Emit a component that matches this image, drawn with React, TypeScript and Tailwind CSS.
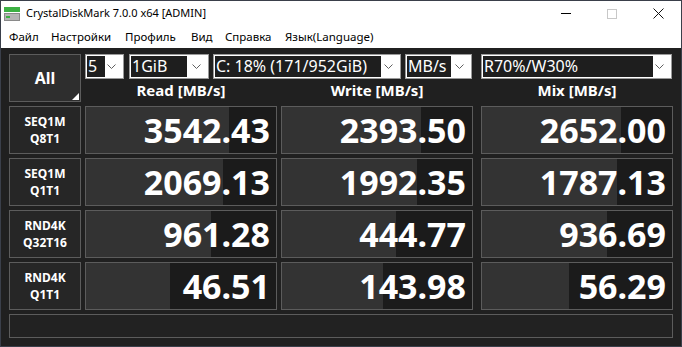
import React from 'react';

const ROWS = [
  { l1: 'SEQ1M', l2: 'Q8T1', vals: [['3542.43', 75], ['2393.50', 73], ['2652.00', 73]] },
  { l1: 'SEQ1M', l2: 'Q1T1', vals: [['2069.13', 72], ['1992.35', 71], ['1787.13', 71]] },
  { l1: 'RND4K', l2: 'Q32T16', vals: [['961.28', 66], ['444.77', 60], ['936.69', 66]] },
  { l1: 'RND4K', l2: 'Q1T1', vals: [['46.51', 44], ['143.98', 53], ['56.29', 46]] },
] as const;

const Chevron = () => (
  <svg width="9" height="6" viewBox="0 0 9 6" className="shrink-0">
    <polyline points="0.5,0.5 4.5,4.5 8.5,0.5" fill="none" stroke="#606060" strokeWidth="1" />
  </svg>
);

const Select = ({ text, w, boxW, ml }: { text: string; w: string; boxW: string; ml: string }) => (
  <div className={`${w} ${ml} h-[25px] bg-white border border-[#9a9a9a] flex items-center pl-[1px] pr-[7px]`}>
    <div className={`${boxW} h-[21px] bg-[#1e1e1e] text-white text-[16px] leading-[21px] pl-[1px] whitespace-nowrap overflow-hidden`}>
      {text}
    </div>
    <div className="flex-1" />
    <Chevron />
  </div>
);

const Cell = ({ value, pct, w }: { value: string; pct: number; w: string }) => (
  <div className={`${w} h-[48px] relative border border-[#5c5c5c] bg-[#1b1b1b] overflow-hidden`}>
    <div className="absolute inset-y-0 left-0 bg-[#333333]" style={{ width: `${pct}%` }} />
    <div className="relative h-full flex items-center justify-end pr-[6px] text-white font-bold text-[34px] leading-none">
      {value}
    </div>
  </div>
);

export default function App() {
  return (
    <div className="w-[682px] h-[347px] flex flex-col border border-[#3a3f4a] overflow-hidden" style={{ fontFamily: '"Noto Sans", "DejaVu Sans", sans-serif' }}>
      {/* title bar */}
      <div className="h-[25px] bg-white flex items-center shrink-0">
        <svg width="16" height="14" viewBox="0 0 16 14" className="ml-[3px]">
          <rect x="0" y="0" width="16" height="5" fill="#3cb043" />
          <rect x="0" y="6" width="16" height="8" fill="#8a8a8a" />
          <rect x="1" y="7" width="14" height="6" fill="#b5b5b5" />
          <rect x="2" y="9" width="4" height="2" fill="#3cb043" />
        </svg>
        <span className="ml-[6px] text-[11px] text-black">CrystalDiskMark 7.0.0 x64 [ADMIN]</span>
        <div className="flex-1" />
        <div className="w-[46px] flex justify-center">
          <div className="w-[10px] h-px bg-black" />
        </div>
        <div className="w-[46px] flex justify-center">
          <div className="w-[10px] h-[10px] border border-[#c8c8c8]" />
        </div>
        <div className="w-[46px] flex justify-center">
          <svg width="11" height="11" viewBox="0 0 11 11">
            <path d="M0.5 0.5 L10.5 10.5 M10.5 0.5 L0.5 10.5" stroke="#111" strokeWidth="1" />
          </svg>
        </div>
      </div>
      {/* menu bar */}
      <div className="h-[22px] bg-white flex items-center text-[11.5px] text-black pl-[8px] shrink-0">
        <span className="w-[42px]">Файл</span>
        <span className="w-[74px]">Настройки</span>
        <span className="w-[66px]">Профиль</span>
        <span className="w-[34px]">Вид</span>
        <span className="w-[60px]">Справка</span>
        <span>Язык(Language)</span>
      </div>
      {/* main */}
      <div className="flex-1 bg-[#202020] pl-[8px] pt-[6px]">
        <div className="flex gap-[4px]">
          <div className="w-[72px] h-[48px] relative border border-[#5c5c5c] bg-[#2e2e2e] flex items-center justify-center text-white font-bold text-[16px]">
            All
            <div className="absolute right-[1px] bottom-[1px] w-0 h-0 border-l-[7px] border-l-transparent border-b-[7px] border-b-white" />
          </div>
          <div className="flex flex-col">
            <div className="flex">
              <Select text="5" w="w-[39px]" boxW="w-[18px]" ml="ml-0" />
              <Select text="1GiB" w="w-[80px]" boxW="w-[56px]" ml="ml-[5px]" />
              <Select text="C: 18% (171/952GiB)" w="w-[188px]" boxW="w-[166px]" ml="ml-[4px]" />
              <Select text="MB/s" w="w-[67px]" boxW="w-[44px]" ml="ml-[4px]" />
              <Select text="R70%/W30%" w="w-[191px]" boxW="w-[170px]" ml="ml-[9px]" />
            </div>
            <div className="flex h-[23px] items-center text-white font-bold text-[15px]">
              <div className="w-[192px] text-center">Read [MB/s]</div>
              <div className="w-[192px] ml-[4px] text-center">Write [MB/s]</div>
              <div className="w-[192px] ml-[8px] text-center">Mix [MB/s]</div>
            </div>
          </div>
        </div>
        <div className="flex flex-col gap-[4px] mt-[4px]">
          {ROWS.map((r, i) => (
            <div key={i} className="flex">
              <div className="w-[72px] h-[48px] border border-[#5c5c5c] bg-[#262626] flex flex-col items-center justify-center text-white font-bold text-[12px] leading-[17px]">
                <span>{r.l1}</span>
                <span>{r.l2}</span>
              </div>
              <div className="ml-[4px]"><Cell value={r.vals[0][0]} pct={r.vals[0][1]} w="w-[192px]" /></div>
              <div className="ml-[4px]"><Cell value={r.vals[1][0]} pct={r.vals[1][1]} w="w-[192px]" /></div>
              <div className="ml-[8px]"><Cell value={r.vals[2][0]} pct={r.vals[2][1]} w="w-[192px]" /></div>
            </div>
          ))}
        </div>
        <div className="w-[664px] h-[24px] mt-[4px] border border-[#5c5c5c] bg-[#222222]" />
      </div>
    </div>
  );
}
